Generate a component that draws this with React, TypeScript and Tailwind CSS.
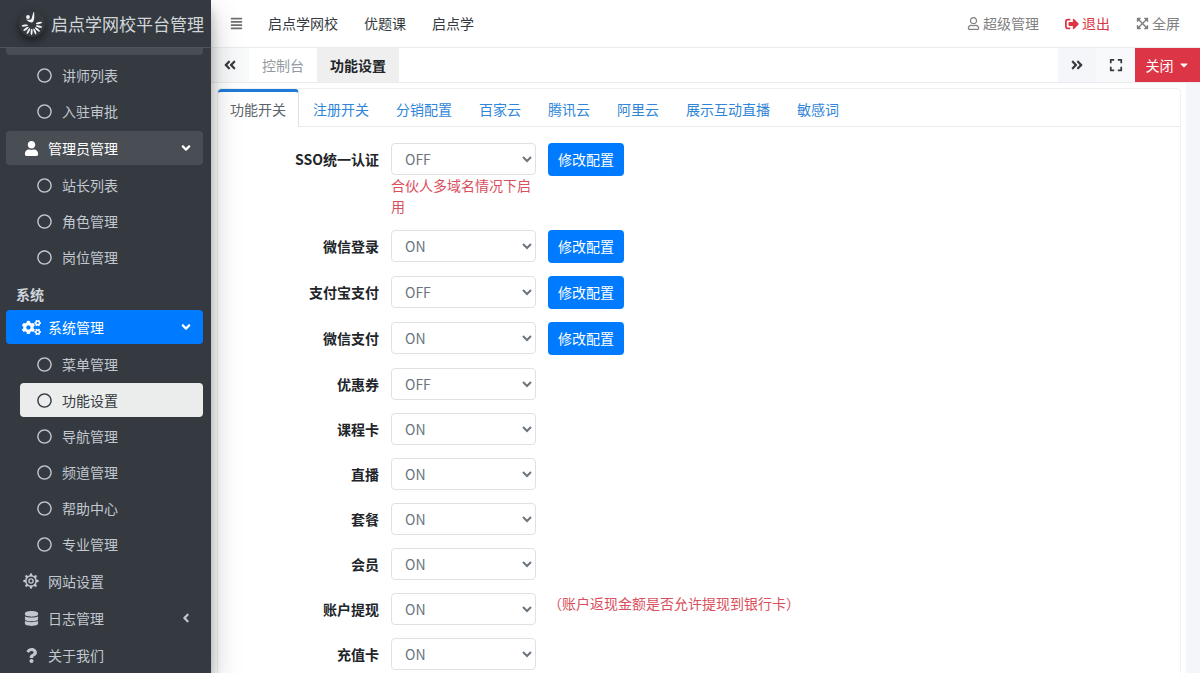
import React, { useState } from "react";
import {
  FaAlignJustify,
  FaAngleDoubleLeft,
  FaAngleDoubleRight,
  FaAngleDown,
  FaAngleLeft,
  FaCaretDown,
  FaCogs,
  FaDatabase,
  FaExpand,
  FaExpandArrowsAlt,
  FaQuestion,
  FaRegCircle,
  FaRegUser,
  FaSignOutAlt,
  FaUser,
} from "react-icons/fa";

const teacherItems = ["讲师列表", "入驻审批"];
const adminItems = ["站长列表", "角色管理", "岗位管理"];
const systemItems = ["菜单管理", "功能设置", "导航管理", "频道管理", "帮助中心", "专业管理"];

const tabs = ["功能开关", "注册开关", "分销配置", "百家云", "腾讯云", "阿里云", "展示互动直播", "敏感词"];

type Setting = {
  id: string;
  label: string;
  value: string;
  config?: boolean;
  help?: string;
  note?: string;
};

const settings: Setting[] = [
  { id: "sso", label: "SSO统一认证", value: "OFF", config: true, help: "合伙人多域名情况下启用" },
  { id: "wxlogin", label: "微信登录", value: "ON", config: true },
  { id: "alipay", label: "支付宝支付", value: "OFF", config: true },
  { id: "wxpay", label: "微信支付", value: "ON", config: true },
  { id: "coupon", label: "优惠券", value: "OFF" },
  { id: "card", label: "课程卡", value: "ON" },
  { id: "live", label: "直播", value: "ON" },
  { id: "package", label: "套餐", value: "ON" },
  { id: "member", label: "会员", value: "ON" },
  { id: "withdraw", label: "账户提现", value: "ON", note: "（账户返现金额是否允许提现到银行卡）" },
  { id: "recharge", label: "充值卡", value: "ON" },
];

function Logo() {
  const petals = [76, 104, 131, 157, 183, 209, 236, 264];
  return (
    <span className="flex size-[26px] shrink-0 items-center justify-center rounded-full shadow-[0_4px_8px_rgba(0,0,0,0.5)]">
      <svg viewBox="0 0 24 24" className="size-6" fill="#f1f3f5">
        <circle cx="8" cy="5" r="1.9" />
        <path d="M14 -1 C12.6 2 12.2 4.8 11.4 7 C10 8.2 8 8 6 7.2 C7.4 9.2 9.6 10.4 12 10.6 C14.4 9.4 14.6 5 14 -1 Z" />
        {petals.map((a) => (
          <ellipse key={a} cx="12" cy="5.6" rx="1" ry="3.2" transform={`rotate(${a} 12 12.8)`} />
        ))}
      </svg>
    </span>
  );
}

function GearIcon() {
  const teeth = [0, 45, 90, 135, 180, 225, 270, 315];
  return (
    <svg viewBox="0 0 16 16" className="size-4" fill="none" stroke="currentColor">
      <circle cx="8" cy="8" r="5.2" strokeWidth="1.5" />
      <circle cx="8" cy="8" r="2.1" strokeWidth="1.4" />
      {teeth.map((a) => (
        <path key={a} d="M8 2.2 V1.4" strokeWidth="2.4" strokeLinecap="round" transform={`rotate(${a} 8 8)`} />
      ))}
    </svg>
  );
}

function SubMenu({ items, active }: { items: string[]; active?: string }) {
  return (
    <ul className="ml-3.5 flex flex-col gap-0.5">
      {items.map((item) => (
        <li key={item}>
          <a
            href="#"
            className={
              item === active
                ? "flex h-[34px] items-center gap-2.5 rounded-sm bg-[#ebeded] pl-[17px] text-[#343a40]"
                : "flex h-[34px] items-center gap-2.5 rounded-sm pl-[17px] text-[#c2c7d0]"
            }
          >
            <FaRegCircle className="size-[15px]" />
            {item}
          </a>
        </li>
      ))}
    </ul>
  );
}

function MenuItem({ icon, label, arrow, className }: {
  icon: React.ReactNode;
  label: string;
  arrow?: React.ReactNode;
  className: string;
}) {
  return (
    <a href="#" className={`flex h-[34px] items-center rounded-sm pr-2.5 pl-3.5 ${className}`}>
      <span className="flex w-[22px] justify-center">{icon}</span>
      <span className="ml-1.5 flex-1">{label}</span>
      {arrow}
    </a>
  );
}

function Sidebar() {
  return (
    <aside className="relative z-10 flex w-[211px] shrink-0 flex-col bg-[#343a40] shadow-[0_14px_28px_rgba(0,0,0,0.25),0_10px_10px_rgba(0,0,0,0.22)]">
      <a href="#" className="flex h-12 shrink-0 items-center gap-1.5 border-b border-[#4b545c] pl-[19px] text-[17px] whitespace-nowrap text-[#d3d6d9]">
        <Logo />
        启点学网校平台管理
      </a>
      <nav className="flex flex-col gap-[3px] overflow-hidden pr-2 pl-1.5">
        <div className="h-[7px] shrink-0 rounded-b-sm bg-[#494e54]" />
        <SubMenu items={teacherItems} />
        <MenuItem
          icon={<FaUser className="size-[15px]" />}
          label="管理员管理"
          arrow={<FaAngleDown className="size-3.5" />}
          className="bg-[#494e54] text-white"
        />
        <SubMenu items={adminItems} />
        <h2 className="flex h-[30px] items-end pb-0.5 pl-2.5 font-bold text-[#d0d4db]">系统</h2>
        <MenuItem
          icon={<FaCogs className="size-[19px]" />}
          label="系统管理"
          arrow={<FaAngleDown className="size-3.5" />}
          className="bg-[#007bff] text-white"
        />
        <SubMenu items={systemItems} active="功能设置" />
        <MenuItem icon={<GearIcon />} label="网站设置" className="text-[#c2c7d0]" />
        <MenuItem
          icon={<FaDatabase className="size-[15px]" />}
          label="日志管理"
          arrow={<FaAngleLeft className="size-3.5" />}
          className="text-[#c2c7d0]"
        />
        <MenuItem icon={<FaQuestion className="size-[15px]" />} label="关于我们" className="text-[#c2c7d0]" />
      </nav>
    </aside>
  );
}

function TopBar() {
  return (
    <header className="flex h-12 shrink-0 items-center justify-between border-b border-[#e9ecef] px-[7px]">
      <div className="flex items-center text-[#343a40]">
        <button type="button" aria-label="菜单" className="px-3 text-[#707070]">
          <FaAlignJustify className="size-[13px]" />
        </button>
        <a href="#" className="px-[13px]">启点学网校</a>
        <a href="#" className="px-[13px]">优题课</a>
        <a href="#" className="px-[13px]">启点学</a>
      </div>
      <div className="flex items-center text-[#808080]">
        <a href="#" className="flex items-center gap-[3px] px-[13px]">
          <FaRegUser className="size-[13px]" />
          超级管理
        </a>
        <a href="#" className="flex items-center gap-[3px] px-[13px] text-[#dc3545]">
          <FaSignOutAlt className="size-3.5" />
          退出
        </a>
        <a href="#" className="flex items-center gap-[3px] px-[13px]">
          <FaExpandArrowsAlt className="size-[13px]" />
          全屏
        </a>
      </div>
    </header>
  );
}

function PageTabs() {
  return (
    <div className="flex h-[35px] shrink-0 border-b border-[#e9ecef] text-[#343a40]">
      <button type="button" aria-label="向左" className="flex w-[38px] items-center justify-center bg-[#f8f9fa]">
        <FaAngleDoubleLeft className="size-3.5" />
      </button>
      <a href="#" className="flex items-center px-[13px] text-[#939ba2]">控制台</a>
      <a href="#" className="flex items-center bg-[#efefef] px-[13px] font-bold text-[#212529]">功能设置</a>
      <div className="ml-auto flex">
        <button type="button" aria-label="向右" className="flex w-[38px] items-center justify-center bg-[#f4f6f9]">
          <FaAngleDoubleRight className="size-3.5" />
        </button>
        <button type="button" aria-label="最大化" className="flex w-[39px] items-center justify-center bg-[#f8f9fa]">
          <FaExpand className="size-3.5" />
        </button>
        <button type="button" className="flex w-[65px] items-center justify-center gap-1 bg-[#dc3545] text-white">
          关闭
          <FaCaretDown className="size-3" />
        </button>
      </div>
    </div>
  );
}

function SettingRow({ item }: { item: Setting }) {
  const [value, setValue] = useState(item.value);

  return (
    <div className="grid grid-cols-6 items-start">
      <label htmlFor={item.id} className="flex h-8 items-center justify-end px-1.5 font-bold whitespace-nowrap text-[#212529]">
        {item.label}
      </label>
      <div className="px-1.5">
        <select
          id={item.id}
          value={value}
          onChange={(e) => setValue(e.target.value)}
          className="block h-8 w-full rounded-sm border border-[#dee2e6] bg-white pr-1 pl-[9px] text-[#6c757d]"
        >
          <option value="ON">ON</option>
          <option value="OFF">OFF</option>
        </select>
        {item.help && <p className="text-[#d9505d]">{item.help}</p>}
      </div>
      <div className="col-span-4 px-1.5">
        {item.config && (
          <button type="button" className="block h-[33px] rounded-sm bg-[#007bff] px-2.5 text-white">
            修改配置
          </button>
        )}
        {item.note && <p className="text-[#d9505d]">{item.note}</p>}
      </div>
    </div>
  );
}

export default function App() {
  const [tab, setTab] = useState(tabs[0]);

  return (
    <div className="flex h-screen overflow-hidden bg-white font-['Noto_Sans_CJK_SC',sans-serif] text-[14px] leading-[21px]">
      <Sidebar />
      <div className="flex min-w-0 flex-1 flex-col">
        <TopBar />
        <PageTabs />
        <main className="min-h-0 flex-1 overflow-hidden bg-[#f4f6f9] pr-3.5">
          <div className="min-h-full bg-white pt-[5px] pr-[5px] pl-1.5">
            <section className="rounded-t-sm border border-[#eff0f1] bg-white">
              <div role="tablist" className="flex h-[38px] items-stretch gap-px border-b border-[#e9ecef]">
                {tabs.map((name) => (
                  <button
                    key={name}
                    type="button"
                    role="tab"
                    aria-selected={name === tab}
                    onClick={() => setTab(name)}
                    className={
                      name === tab
                        ? "-mb-px rounded-t-sm border-t-3 border-r border-t-[#1f7ad8] border-r-[#dee2e6] bg-white px-3 whitespace-nowrap text-[#5c636a]"
                        : "border-t-3 border-transparent px-[13px] whitespace-nowrap text-[#2f86d9]"
                    }
                  >
                    {name}
                  </button>
                ))}
              </div>
              <div className="flex flex-col gap-[13px] px-2.5 py-4">
                {settings.map((item) => (
                  <SettingRow key={item.id} item={item} />
                ))}
              </div>
            </section>
          </div>
        </main>
      </div>
    </div>
  );
}
